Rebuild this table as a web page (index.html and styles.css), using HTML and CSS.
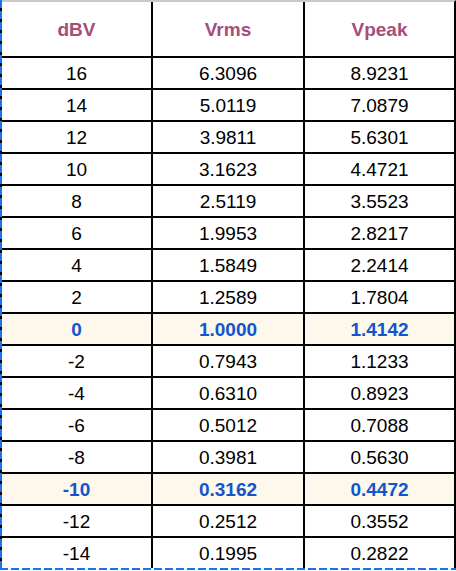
FILE: index.html
```html
<!DOCTYPE html>
<html>
<head>
<meta charset="utf-8">
<link rel="stylesheet" href="styles.css">
</head>
<body>
<div class="frame">
  <div class="sheet">
    <div class="cell head">dBV</div><div class="cell head">Vrms</div><div class="cell head">Vpeak</div>
    <div class="cell">16</div><div class="cell">6.3096</div><div class="cell">8.9231</div>
    <div class="cell">14</div><div class="cell">5.0119</div><div class="cell">7.0879</div>
    <div class="cell">12</div><div class="cell">3.9811</div><div class="cell">5.6301</div>
    <div class="cell">10</div><div class="cell">3.1623</div><div class="cell">4.4721</div>
    <div class="cell">8</div><div class="cell">2.5119</div><div class="cell">3.5523</div>
    <div class="cell">6</div><div class="cell">1.9953</div><div class="cell">2.8217</div>
    <div class="cell">4</div><div class="cell">1.5849</div><div class="cell">2.2414</div>
    <div class="cell">2</div><div class="cell">1.2589</div><div class="cell">1.7804</div>
    <div class="cell hl">0</div><div class="cell hl">1.0000</div><div class="cell hl">1.4142</div>
    <div class="cell">-2</div><div class="cell">0.7943</div><div class="cell">1.1233</div>
    <div class="cell">-4</div><div class="cell">0.6310</div><div class="cell">0.8923</div>
    <div class="cell">-6</div><div class="cell">0.5012</div><div class="cell">0.7088</div>
    <div class="cell">-8</div><div class="cell">0.3981</div><div class="cell">0.5630</div>
    <div class="cell hl">-10</div><div class="cell hl">0.3162</div><div class="cell hl">0.4472</div>
    <div class="cell">-12</div><div class="cell">0.2512</div><div class="cell">0.3552</div>
    <div class="cell">-14</div><div class="cell">0.1995</div><div class="cell">0.2822</div>
  </div>
</div>
</body>
</html>
```

FILE: styles.css
```css
html, body {
  margin: 0;
  padding: 0;
  background: #fff;
}

.frame {
  position: relative;
  width: 456px;
}

.sheet {
  display: grid;
  grid-template-columns: 149px 150px 149px;
  grid-template-rows: 54px;
  grid-auto-rows: 30px;
  gap: 2px;
  background: #000;
  border-top: 2px solid #c9c9c9;
  border-left: 2px solid #000;
  border-right: 2px solid #000;
  border-bottom: 2px solid #fff;
  font-family: "Liberation Sans", Arial, sans-serif;
  font-size: 19px;
  color: #000;
}

.cell {
  background: #fff;
  display: flex;
  align-items: center;
  justify-content: center;
  line-height: 1;
}

.head {
  color: #a64d79;
  font-weight: bold;
}

.hl {
  background: #fef7ec;
  color: #1155cc;
  font-weight: bold;
}

.frame::before {
  content: "";
  position: absolute;
  left: 0;
  top: 0;
  bottom: 0;
  width: 2px;
  background: repeating-linear-gradient(to bottom, #1a73e8 0 8px, transparent 8px 11px);
}

.frame::after {
  content: "";
  position: absolute;
  left: 0;
  right: 0;
  bottom: 0;
  height: 2px;
  background: repeating-linear-gradient(to right, #1a73e8 0 8px, transparent 8px 11px);
}
```
